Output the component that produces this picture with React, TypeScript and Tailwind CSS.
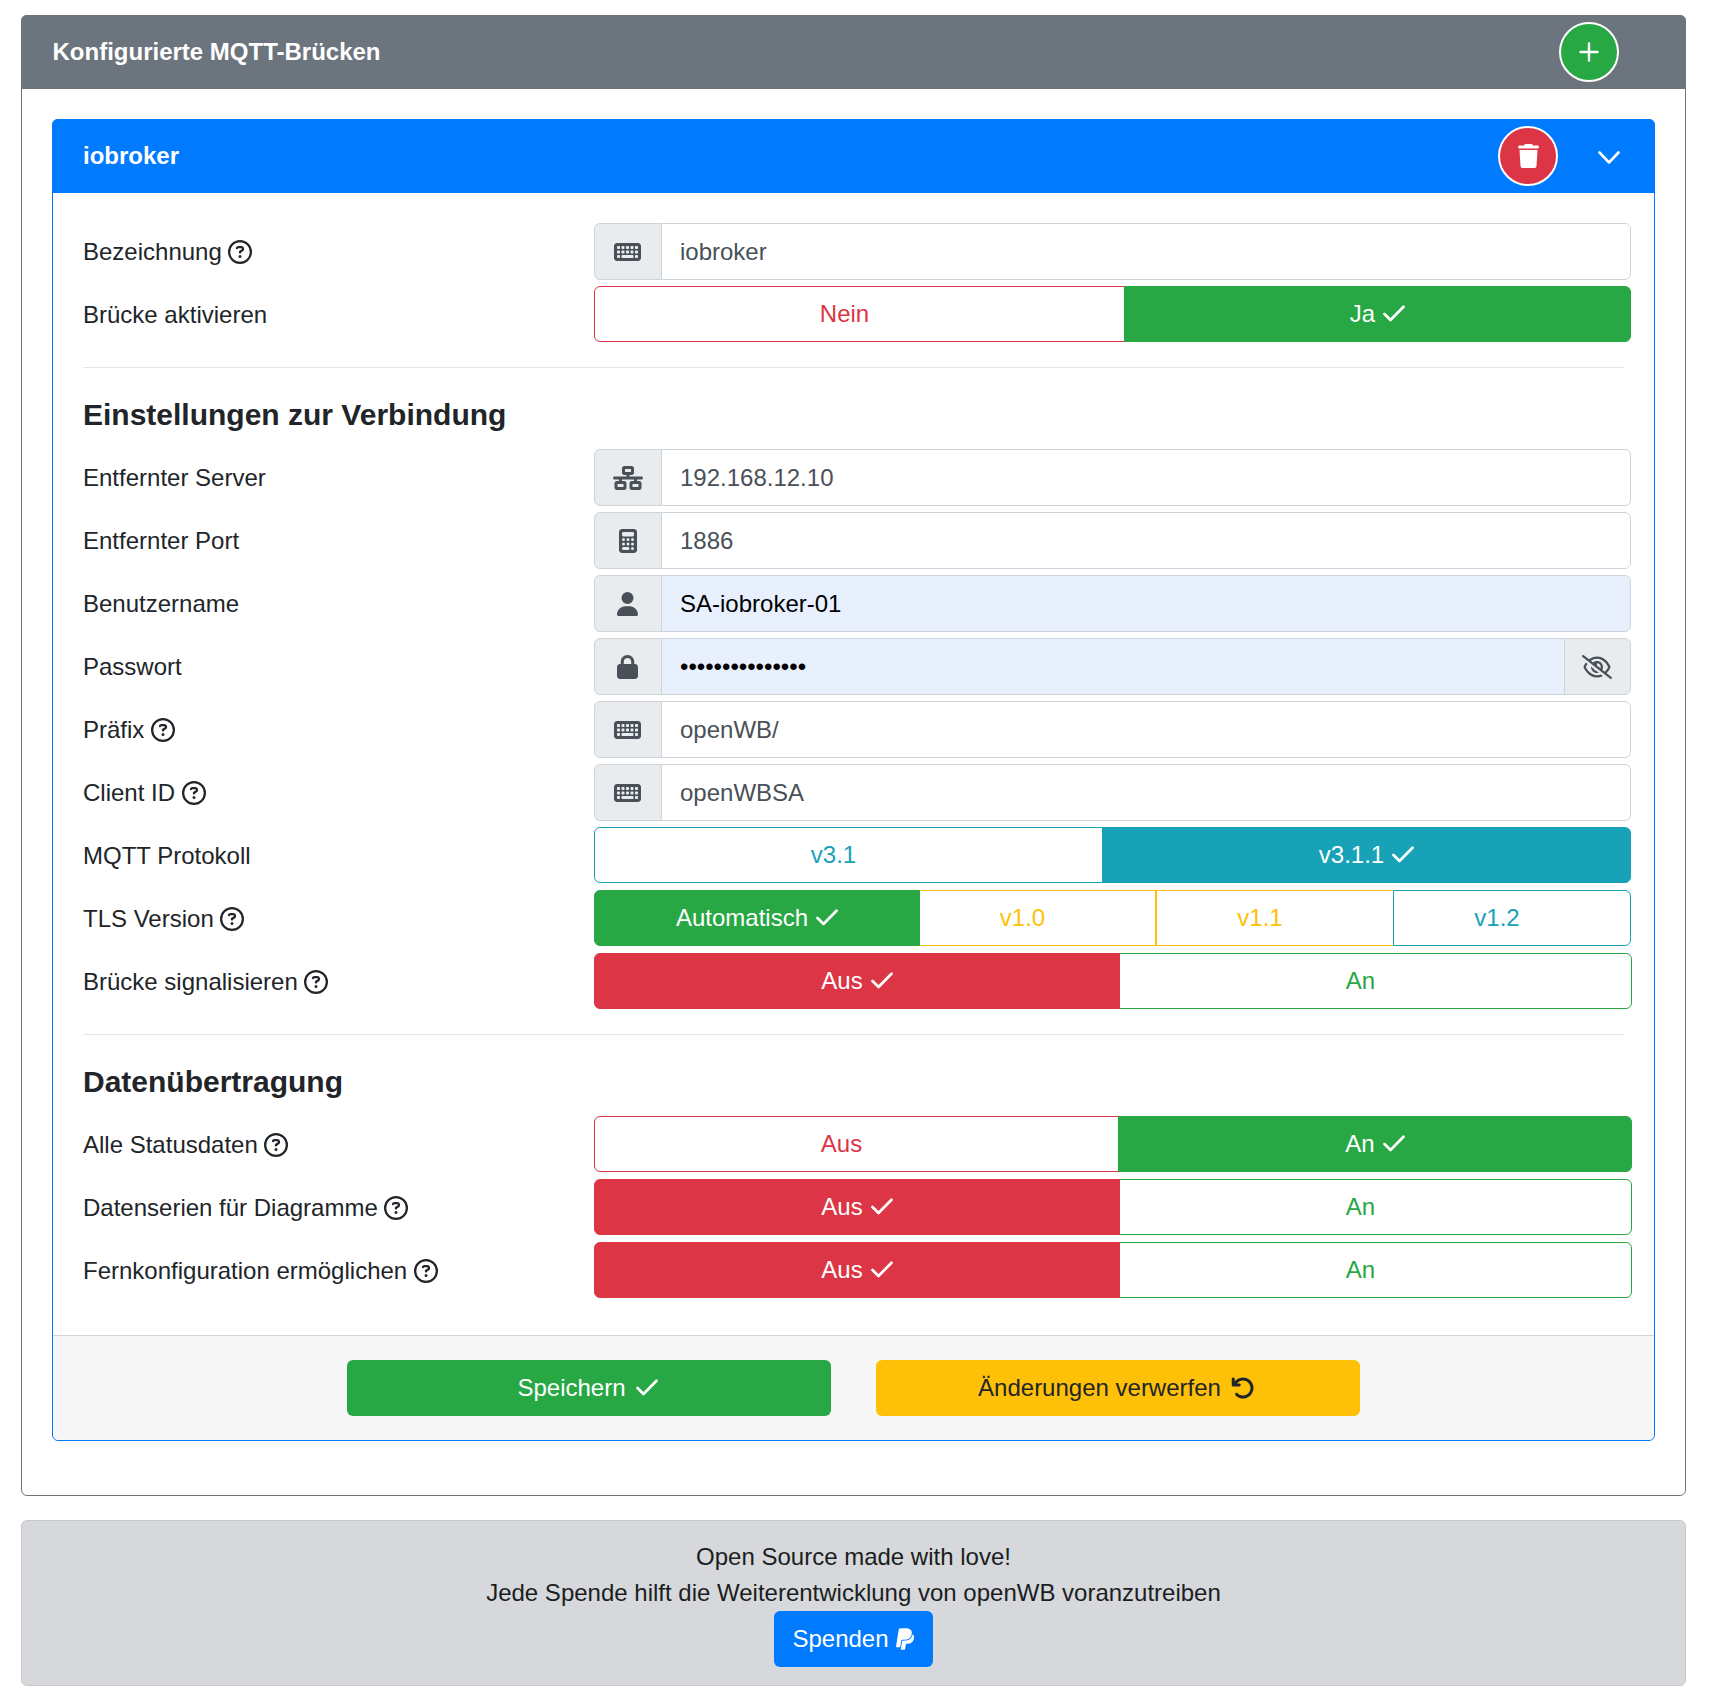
import type { ReactNode } from "react";
import {
  FaArrowRotateLeft,
  FaCalculator,
  FaKeyboard,
  FaLock,
  FaNetworkWired,
  FaPaypal,
  FaRegCircleQuestion,
  FaRegEyeSlash,
  FaTrash,
  FaUser,
} from "react-icons/fa6";

const Check = ({ cls }: { cls?: string }) => (
  <svg viewBox="0 0 22 17" className={`${cls ?? "ml-[8px]"} -mt-[2px] inline-block h-[17px] w-[22px]`} fill="none" stroke="currentColor" strokeWidth="2.7" strokeLinecap="round" strokeLinejoin="round">
    <path d="M1.5 9 L7.5 15 L20.5 1.8" />
  </svg>
);

const Help = () => <FaRegCircleQuestion className="ml-[6.67px] inline-block h-6 w-6 text-[#212529]" />;

type Opt = { label: string; active?: boolean; on: string; off: string; cls?: string };

const Toggle = ({ options, cols }: { options: Opt[]; cols: string }) => (
  <div className={`grid h-14 ${cols}`}>
    {options.map((o, i) => (
      <div
        key={o.label}
        className={`flex items-center justify-center border ${o.active ? `relative z-10 ${o.on}` : o.off} ${i === 0 ? "rounded-l-[6px]" : "-ml-px"} ${i === options.length - 1 ? "rounded-r-[6px]" : ""} ${o.cls ?? ""}`}
      >
        {o.label}
        {/* inactive options keep the check's space, hidden */}
        <Check cls={o.active ? "ml-[8px]" : "invisible ml-[8px]"} />
      </div>
    ))}
  </div>
);

const green = { on: "border-[#28a745] bg-[#28a745] text-white", off: "border-[#28a745] bg-white text-[#28a745]" };
const red = { on: "border-[#dc3545] bg-[#dc3545] text-white", off: "border-[#dc3545] bg-white text-[#dc3545]" };
const info = { on: "border-[#17a2b8] bg-[#17a2b8] text-white", off: "border-[#17a2b8] bg-white text-[#17a2b8]" };
const warn = { on: "border-[#ffc107] bg-[#ffc107] text-white", off: "border-[#ffc107] bg-white text-[#ffc107]" };

const Row = ({ label, help, children, first }: { label: string; help?: boolean; children: ReactNode; first?: boolean }) => (
  <div className={`flex items-center ${first ? "" : "mt-[7px]"}`}>
    <div className="flex w-[511px] items-center pt-[2px] text-[#212529]">
      {label}
      {help && <Help />}
    </div>
    {children}
  </div>
);

const TextInput = ({ icon, value, filled, append }: { icon: ReactNode; value: string; filled?: boolean; append?: ReactNode }) => (
  <div className="-mb-px flex h-[57px] w-[1037px]">
    <div className="flex w-[68px] items-center justify-center rounded-l-[6px] border border-[#ced4da] bg-[#e9ecef] pr-px text-[#495057]">{icon}</div>
    <div className={`-ml-px flex min-w-0 flex-1 items-center border border-[#ced4da] px-[18px] ${append ? "" : "rounded-r-[6px]"} ${filled ? "bg-[#e8f0fe] text-black" : "bg-white text-[#495057]"}`}>
      {value}
    </div>
    {append && (
      <div className="-ml-px flex w-[67px] items-center justify-center rounded-r-[6px] border border-[#ced4da] bg-[#e9ecef] pr-px text-[#495057]">{append}</div>
    )}
  </div>
);

const Divider = () => <div className="mt-[25px] mr-[8px] border-t border-[#e5e6e7]" />;

const Heading = ({ children }: { children: ReactNode }) => (
  <h2 className="mt-[27px] mb-[14px] text-[30px] leading-[40px] font-bold text-[#212529]">{children}</h2>
);

const RoundButton = ({ color, children }: { color: string; children: ReactNode }) => (
  <div className={`flex h-[60px] w-[60px] items-center justify-center rounded-full border-[2px] border-white text-white ${color}`}>{children}</div>
);

const aus = [
  { label: "Aus", active: true, ...red },
  { label: "An", ...green },
];

export default function App() {
  return (
    <div className="min-h-[1696px] bg-white pt-[15px] pl-[21px] font-['Liberation_Sans',Arial,sans-serif] text-[24px] leading-[36px]">
      <div className="w-[1665px]">
        <div className="rounded-[6px] border border-[#6c757d]">
          <div className="-m-px flex h-[74px] items-center justify-between rounded-t-[6px] bg-[#6c757d] pr-[67px] pl-[31.5px] font-bold text-white">
            <span>Konfigurierte MQTT-Brücken</span>
            <RoundButton color="bg-[#28a745]">
              <svg viewBox="0 0 20 20" className="h-5 w-5" fill="none" stroke="currentColor" strokeWidth="2.4" strokeLinecap="round">
                <path d="M10 1.5 V18.5 M1.5 10 H18.5" />
              </svg>
            </RoundButton>
          </div>

          <div className="px-[30px] pt-[31px] pb-[54px]">
            <div className="rounded-[6px] border border-[#007bff]">
              <div className="-m-px flex h-[74px] items-center rounded-t-[6px] bg-[#007bff] pr-[35px] pl-[31px] font-bold text-white">
                <span className="flex-1">iobroker</span>
                <RoundButton color="bg-[#dc3545]">
                  <FaTrash className="h-6 w-[21px]" />
                </RoundButton>
                <svg viewBox="0 0 22 13" className="mt-[3px] ml-[40px] h-[13px] w-[22px]" fill="none" stroke="currentColor" strokeWidth="2.6" strokeLinecap="round" strokeLinejoin="round">
                  <path d="M1.5 1.5 L11 11.5 L20.5 1.5" />
                </svg>
              </div>

              <div className="pt-[31px] pr-[22px] pb-[37px] pl-[30px]">
                <Row label="Bezeichnung" help first>
                  <TextInput icon={<FaKeyboard className="h-6 w-[27px]" />} value="iobroker" />
                </Row>
                <Row label="Brücke aktivieren">
                  <Toggle cols="grid-cols-[531px_506px]" options={[{ label: "Nein", ...red }, { label: "Ja", active: true, ...green }]} />
                </Row>
                <Divider />
                <Heading>Einstellungen zur Verbindung</Heading>
                <Row label="Entfernter Server" first>
                  <TextInput icon={<FaNetworkWired className="h-6 w-[30px]" />} value="192.168.12.10" />
                </Row>
                <Row label="Entfernter Port">
                  <TextInput icon={<FaCalculator className="h-6 w-[18px]" />} value="1886" />
                </Row>
                <Row label="Benutzername">
                  <TextInput icon={<FaUser className="h-6 w-[21px]" />} value="SA-iobroker-01" filled />
                </Row>
                <Row label="Passwort">
                  <TextInput icon={<FaLock className="h-6 w-[21px]" />} value="•••••••••••••••" filled append={<FaRegEyeSlash className="h-6 w-[30px]" />} />
                </Row>
                <Row label="Präfix" help>
                  <TextInput icon={<FaKeyboard className="h-6 w-[27px]" />} value="openWB/" />
                </Row>
                <Row label="Client ID" help>
                  <TextInput icon={<FaKeyboard className="h-6 w-[27px]" />} value="openWBSA" />
                </Row>
                <Row label="MQTT Protokoll">
                  <Toggle cols="grid-cols-[509px_528px]" options={[{ label: "v3.1", ...info }, { label: "v3.1.1", active: true, ...info }]} />
                </Row>
                <Row label="TLS Version" help>
                  <Toggle
                    cols="grid-cols-[326px_236px_238px_237px]"
                    options={[
                      { label: "Automatisch", active: true, ...green },
                      { label: "v1.0", ...warn },
                      { label: "v1.1", ...warn, cls: "border-l-2" },
                      { label: "v1.2", ...info, cls: "relative" },
                    ]}
                  />
                </Row>
                <Row label="Brücke signalisieren" help>
                  <Toggle cols="grid-cols-[526px_512px]" options={aus} />
                </Row>
                <Divider />
                <Heading>Datenübertragung</Heading>
                <Row label="Alle Statusdaten" help first>
                  <Toggle cols="grid-cols-[525px_513px]" options={[{ label: "Aus", ...red }, { label: "An", active: true, ...green }]} />
                </Row>
                <Row label="Datenserien für Diagramme" help>
                  <Toggle cols="grid-cols-[526px_512px]" options={aus} />
                </Row>
                <Row label="Fernkonfiguration ermöglichen" help>
                  <Toggle cols="grid-cols-[526px_512px]" options={aus} />
                </Row>
              </div>

              <div className="flex justify-center gap-[45px] rounded-b-[6px] border-t border-[#d4d4d4] bg-[#f7f7f7] pt-6 pb-6">
                <div className="flex h-14 w-[484px] items-center justify-center rounded-[6px] bg-[#28a745] text-white">
                  Speichern
                  <Check cls="ml-[10px] mr-[3px]" />
                </div>
                <div className="flex h-14 w-[484px] items-center justify-center rounded-[6px] bg-[#ffc107] text-[#212529]">
                  Änderungen verwerfen
                  <FaArrowRotateLeft className="mr-[3px] ml-[10px] h-6 w-6" />
                </div>
              </div>
            </div>
          </div>
        </div>

        <div className="mt-[24px] flex flex-col items-center rounded-[6px] border border-[#c6c8ca] bg-[#d6d8db] py-[18px] text-[#1b1e21]">
          <div>Open Source made with love!</div>
          <div>Jede Spende hilft die Weiterentwicklung von openWB voranzutreiben</div>
          <div className="flex h-14 w-[159px] items-center justify-center rounded-[6px] bg-[#007bff] text-white">
            Spenden
            <FaPaypal className="ml-[6px] h-6 w-5" />
          </div>
        </div>
      </div>
    </div>
  );
}
